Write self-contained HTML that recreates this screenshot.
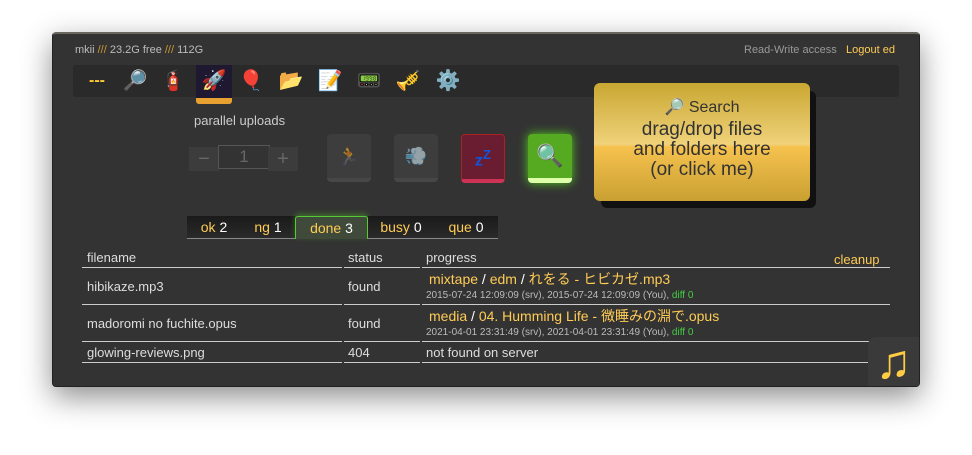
<!DOCTYPE html>
<html><head><meta charset="utf-8"><style>
body{margin:0;width:972px;height:455px;background:#fff;font-family:"Liberation Sans","Noto Sans CJK JP",sans-serif;position:relative;overflow:hidden}
.win{position:absolute;left:52px;top:32px;width:866px;height:352px;background:#333;border:1px solid #222;border-top:2px solid #6a675f;border-radius:4px;box-shadow:0 10px 30px rgba(0,0,0,.45)}
.a{position:absolute}
.y{color:#fc5}
.t{font-size:11px;color:#bbb}
.tb{left:20px;top:31px;width:826px;height:32px;background:#2a2a2a;border-radius:3px}
.ic{position:absolute;top:0;font-size:20px;line-height:32px;width:36px;text-align:center}
.btn{position:absolute;width:44px;height:44px;border-radius:4px;background:#444;border-bottom:4px solid #555}
.tab{position:absolute;top:0;height:22px;line-height:22px;font-size:14px;color:#fc5;text-align:center;background:linear-gradient(#1a1a1a,#2a2a2a)}
.tab b{color:#fff;font-weight:normal}
.row{position:absolute;font-size:13px;color:#ddd}
.hl{position:absolute;height:1px;background:#ccc}
.p{font-size:14px;color:#fc5}
.s{font-size:10px;color:#bbb}
.g{color:#4c4}
</style></head><body>
<div class="win">
<div class="a t" style="left:22px;top:10px;font-size:11px">mkii <span style="color:#c93">///</span> 23.2G free <span style="color:#c93">///</span> 112G</div>
<div class="a t" style="left:691px;top:10px;color:#999">Read-Write access</div>
<div class="a y" style="left:793px;top:10px;font-size:11px">Logout ed</div>
<div class="a tb">
<div class="ic" style="left:6px;color:#fc3;font-size:16px;font-weight:bold">---</div>
<div class="ic" style="left:44px">🔎</div>
<div class="ic" style="left:82px">🧯</div>
<div class="ic" style="left:123px;background:#1e1830;height:33px">🚀<div style="position:absolute;left:0;bottom:-6px;width:36px;height:6px;background:#e8a030;border-radius:0 0 3px 3px"></div></div>
<div class="ic" style="left:160px">🎈</div>
<div class="ic" style="left:200px">📂</div>
<div class="ic" style="left:239px">📝</div>
<div class="ic" style="left:278px">📟</div>
<div class="ic" style="left:317px">🎺</div>
<div class="ic" style="left:357px">⚙️</div>
</div>
<div class="a" style="left:141px;top:79px;font-size:13px;color:#ccc">parallel uploads</div>
<div class="a" style="left:136px;top:113px;width:30px;height:24px;background:#3c3c3c;color:#666;font-size:20px;text-align:center;line-height:24px">−</div>
<div class="a" style="left:165px;top:111px;width:50px;height:22px;border:1px solid #555;color:#666;font-size:17px;text-align:center;line-height:22px">1</div>
<div class="a" style="left:215px;top:113px;width:30px;height:24px;background:#3c3c3c;color:#666;font-size:20px;text-align:center;line-height:24px">+</div>
<div class="btn" style="left:274px;top:100px;opacity:.6;font-size:18px;text-align:center;line-height:44px">🏃</div>
<div class="btn" style="left:341px;top:100px;opacity:.6;font-size:18px;text-align:center;line-height:44px">💨</div>
<div class="btn" style="left:408px;top:100px;background:#6a1c30;border:1px solid #a22;border-bottom:4px solid #c35;width:42px;color:#15d;font-weight:bold;font-size:16px;text-align:center;line-height:40px">z<sup>Z</sup></div>
<div class="btn" style="left:475px;top:100px;background:#5a2;border-bottom:5px solid #dfa;box-shadow:0 0 10px #5c2;font-size:22px;text-align:center;line-height:44px">🔍</div>
<div class="a" style="left:548px;top:57px;width:215px;height:117px;background:#111;border-radius:6px"></div>
<div class="a" style="left:541px;top:49px;width:216px;height:118px;border-radius:6px;background:linear-gradient(#c9a732,#f0d27a 52%,#f6c24e 54%,#c9a032);color:#333;text-align:center">
<div style="font-size:16px;margin-top:14px">🔎 Search</div>
<div style="font-size:19px;line-height:20px;margin-top:3px">drag/drop files<br>and folders here<br>(or click me)</div></div>
<div class="a" style="left:134px;top:182px;width:311px;height:22px;border-bottom:1px solid #888">
<div class="tab" style="left:0;width:54px">ok <b>2</b></div>
<div class="tab" style="left:54px;width:54px">ng <b>1</b></div>
<div class="tab" style="left:108px;width:71px;background:#3f4a3a;border:1px solid #5c3;border-bottom:none;border-radius:3px 3px 0 0;box-shadow:0 -2px 6px rgba(90,200,40,.4)">done <b>3</b></div>
<div class="tab" style="left:181px;width:66px">busy <b>0</b></div>
<div class="tab" style="left:247px;width:64px">que <b>0</b></div>
</div>
<div class="row" style="left:34px;top:216px">filename</div>
<div class="row" style="left:295px;top:216px">status</div>
<div class="row" style="left:373px;top:216px">progress</div>
<div class="a y" style="left:781px;top:218px;font-size:13px">cleanup</div>
<div class="hl" style="left:29px;top:233px;width:260px"></div><div class="hl" style="left:291px;top:233px;width:76px"></div><div class="hl" style="left:369px;top:233px;width:468px"></div>
<div class="row" style="left:34px;top:245px">hibikaze.mp3</div>
<div class="row" style="left:295px;top:245px">found</div>
<div class="a p" style="left:376px;top:235px">mixtape<span style="color:#fff"> / </span>edm<span style="color:#fff"> / </span>れをる - ヒビカゼ.mp3</div>
<div class="a s" style="left:373px;top:256px">2015-07-24 12:09:09 (srv), 2015-07-24 12:09:09 (You), <span class="g">diff 0</span></div>
<div class="hl" style="left:29px;top:270px;width:260px"></div><div class="hl" style="left:291px;top:270px;width:76px"></div><div class="hl" style="left:369px;top:270px;width:468px"></div>
<div class="row" style="left:34px;top:282px">madoromi no fuchite.opus</div>
<div class="row" style="left:295px;top:282px">found</div>
<div class="a p" style="left:376px;top:272px">media<span style="color:#fff"> / </span>04. Humming Life - 微睡みの淵で.opus</div>
<div class="a s" style="left:373px;top:293px">2021-04-01 23:31:49 (srv), 2021-04-01 23:31:49 (You), <span class="g">diff 0</span></div>
<div class="hl" style="left:29px;top:307px;width:260px"></div><div class="hl" style="left:291px;top:307px;width:76px"></div><div class="hl" style="left:369px;top:307px;width:468px"></div>
<div class="row" style="left:34px;top:311px">glowing-reviews.png</div>
<div class="row" style="left:295px;top:311px">404</div>
<div class="row" style="left:373px;top:311px">not found on server</div>
<div class="hl" style="left:29px;top:328px;width:260px"></div><div class="hl" style="left:291px;top:328px;width:76px"></div><div class="hl" style="left:369px;top:328px;width:448px"></div>
<div class="a" style="left:815px;top:303px;width:51px;height:49px;background:#3a3a3a;border-radius:8px 0 0 0;color:#fc4;font-size:48px;text-align:center;line-height:52px">♫</div>
</div>
</body></html>
